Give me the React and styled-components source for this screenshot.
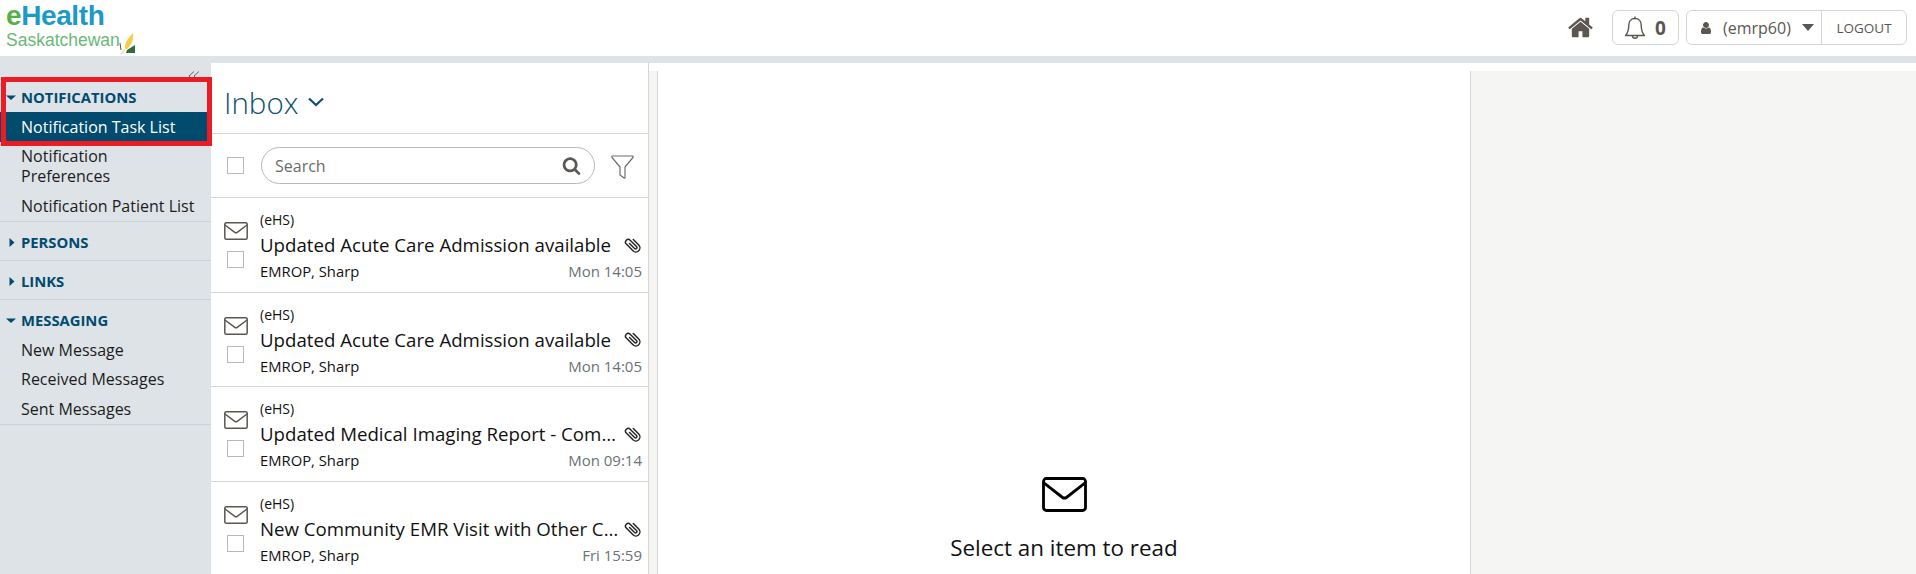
import React from "react";
import styled, { createGlobalStyle } from "styled-components";

const Global = createGlobalStyle`
  html, body { margin: 0; padding: 0; height: 100%; overflow: hidden; background: #fff; }
  body { font-family: "Open Sans", "Liberation Sans", sans-serif; color: #111; }
  * { box-sizing: border-box; }
`;

const Page = styled.div`
  width: 1916px;
  height: 574px;
  overflow: hidden;
  display: flex;
  flex-direction: column;
  position: relative;
`;

const TopBar = styled.header`
  height: 63px;
  flex: none;
  border-bottom: 7px solid #dee3e7;
  display: flex;
  align-items: flex-start;
  justify-content: space-between;
  padding-right: 9px;
`;

const Logo = styled.div`
  padding: 0 0 0 6px;
  display: flex;
  flex-direction: column;
  height: 56px;
  font-family: "Liberation Sans", Arial, sans-serif;
`;

const LogoMain = styled.div`
  font-size: 28px;
  line-height: 32px;
  font-weight: 700;
  letter-spacing: -0.4px;
  color: #1b9ac9;
  b { color: #55b047; font-weight: 700; }
`;

const LogoSub = styled.div`
  font-size: 17.5px;
  line-height: 16px;
  height: 16px;
  color: #69b977;
  display: flex;
  align-items: flex-start;
  svg { flex: none; margin-left: -2px; }
`;

const HeaderTools = styled.div`
  display: flex;
  align-items: center;
  height: 35px;
  margin-top: 10px;
  color: #5b5750;
`;

const HomeLink = styled.span`
  display: flex;
  margin-right: 18px;
`;

const BellBox = styled.div`
  width: 67px;
  height: 35px;
  border: 1px solid #d5d5d5;
  border-radius: 6px;
  display: flex;
  align-items: center;
  padding-left: 11px;
  gap: 9px;
  font-size: 19px;
  font-weight: 700;
  margin-right: 7px;
`;

const UserBox = styled.div`
  width: 221px;
  height: 35px;
  border: 1px solid #d5d5d5;
  border-radius: 6px;
  display: flex;
  align-items: center;
`;

const UserName = styled.div`
  width: 135px;
  flex: none;
  height: 100%;
  display: flex;
  align-items: center;
  padding-left: 12px;
  font-size: 16px;
  color: #5b5750;
  border-right: 1px solid #d5d5d5;
  span { margin-left: 10px; margin-right: 11px; }
`;

const Logout = styled.div`
  flex: 1;
  text-align: center;
  font-size: 13.5px;
  color: #5b5750;
`;

const Body = styled.div`
  flex: 1;
  min-height: 0;
  display: flex;
`;

const Sidebar = styled.nav`
  width: 211px;
  flex: none;
  background: #dee3e7;
`;

const Collapse = styled.div`
  height: 21px;
  display: flex;
  justify-content: flex-end;
  align-items: flex-start;
  padding: 8px 11px 0 0;
`;

const Section = styled.section`
  padding: ${(p) => (p.$first ? "0" : "7.5px")} 0 ${(p) => (p.$open ? "0" : "2.5px")};
  border-bottom: 1px solid #c9d4da;
`;

const SectionHead = styled.div`
  height: 28px;
  display: flex;
  align-items: center;
  padding: 0 0 2px 6px;
  font-size: 14.8px;
  font-weight: 700;
  color: #004b6e;
  svg { width: 11px; margin-right: 4px; flex: none; }
`;

const MenuItem = styled.div`
  padding: 4.75px 12px 4.75px 21px;
  font-size: 16px;
  line-height: 20px;
  color: ${(p) => (p.$active ? "#fff" : "#1c1c1c")};
  background: ${(p) => (p.$active ? "#004b6e" : "transparent")};
`;

const InboxColumn = styled.div`
  width: 438px;
  flex: none;
  border-right: 1px solid #d5d5d5;
`;

const InboxTitle = styled.div`
  height: 71px;
  border-bottom: 1px solid #d5d5d5;
  padding: 8px 0 0 13px;
  display: flex;
  align-items: center;
  gap: 10px;
  font-size: 29.5px;
  font-weight: 300;
  color: #0f4f74;
`;

const SearchRow = styled.div`
  height: 64px;
  border-bottom: 1px solid #d5d5d5;
  display: flex;
  align-items: center;
  padding-left: 16px;
`;

const Box = styled.span`
  width: 17px;
  height: 17px;
  flex: none;
  border: 1px solid #b9b9b9;
  display: block;
  background: #fff;
`;

const SearchField = styled.div`
  width: 334px;
  height: 37px;
  margin-left: 17px;
  margin-right: 16px;
  border: 1px solid #b9b9b9;
  border-radius: 19px;
  display: flex;
  align-items: center;
  justify-content: space-between;
  padding: 0 13px;
  font-size: 16px;
  color: #6b6b6b;
`;

const FilterIcon = styled.svg`
  flex: none;
  margin-top: 3px;
`;

const Row = styled.article`
  height: 94.7px;
  border-bottom: 1px solid #d5d5d5;
  display: flex;
  padding: 13px 6px 0 13px;
`;

const RowMarks = styled.div`
  width: 36px;
  flex: none;
  padding-top: 11px;
  display: flex;
  flex-direction: column;
  gap: 11px;
  span { margin-left: 3px; }
`;

const RowText = styled.div`
  min-width: 0;
  flex: 1;
`;

const Source = styled.div`
  font-size: 14px;
  line-height: 17px;
  color: #111;
`;

const SubjectLine = styled.div`
  display: flex;
  align-items: center;
  height: 33px;
`;

const Subject = styled.div`
  flex: none;
  max-width: 361px;
  white-space: nowrap;
  overflow: hidden;
  text-overflow: ellipsis;
  font-size: 18.67px;
  color: #111;
`;

const ClipSlot = styled.div`
  margin-left: auto;
  display: flex;
`;

const MetaLine = styled.div`
  display: flex;
  justify-content: space-between;
  font-size: 14.8px;
  line-height: 21px;
  color: #111;
`;

const When = styled.span`
  font-size: 15px;
  color: #6c7278;
`;

const Gutter = styled.div`
  width: 9px;
  flex: none;
  margin-top: 8px;
  background: #f5f5f3;
  border-right: 1px solid #d5d5d5;
`;

const ReadingPane = styled.main`
  width: 813px;
  flex: none;
  border-right: 1px solid #d5d5d5;
  margin-top: 8px;
  padding-top: 406px;
  display: flex;
  flex-direction: column;
  align-items: center;
`;

const Hint = styled.div`
  font-size: 22.4px;
  line-height: 30px;
  margin-top: 21px;
  color: #111;
`;

const SidePanel = styled.aside`
  flex: 1;
  margin-top: 8px;
  background: #f5f5f3;
`;

const Callout = styled.div`
  position: absolute;
  left: 1px;
  top: 77px;
  width: 211px;
  height: 69px;
  border: 5px solid #ed1c24;
  pointer-events: none;
`;

const Caret = ({ open }) => (
  <svg viewBox="0 0 11 11" height="11">
    {open ? <path d="M0 3.5h10L5 8z" fill="#004b6e" /> : <path d="M3.500 1l5 4.500-5 4.500z" fill="#004b6e" />}
  </svg>
);

const Envelope = ({ w = 24, h = 18, sw = 1.5, color = "#5b5750" }) => (
  <svg width={w} height={h} viewBox="0 0 24 18" preserveAspectRatio="none" fill="none" stroke={color} strokeWidth={sw} strokeLinejoin="round" strokeLinecap="round">
    <rect x="0.8" y="0.8" width="22.400" height="16.400" rx="1.500" />
    <path d="M1 3l9.800 7.400a2 2 0 0 0 2.400 0L23 3" />
  </svg>
);

const Clip = () => (
  <svg width="18" height="18" viewBox="0 0 19 20" fill="none" stroke="#222" strokeWidth="1.600" strokeLinecap="round" strokeLinejoin="round">
    <path transform="rotate(-45 9.500 10)" d="M8 6v8a1.500 1.500 0 0 0 3 0V4a3 3 0 0 0-6 0v10.500a4.500 4.500 0 0 0 9 0V6" />
  </svg>
);

const subjects = [
  ["Updated Acute Care Admission available", "Mon 14:05"],
  ["Updated Acute Care Admission available", "Mon 14:05"],
  ["Updated Medical Imaging Report - Community Results", "Mon 09:14"],
  ["New Community EMR Visit with Other Clinic Available", "Fri 15:59"],
];

export default function App() {
  return (
    <Page>
      <Global />
      <TopBar>
        <Logo>
          <LogoMain><b>e</b>Health</LogoMain>
          <LogoSub>
            Saskatchewan
            <svg width="18" height="23" viewBox="0 0 18 23">
              <path d="M7 17C6 11 11 5 15 1c1 5-1 12-6 16z" fill="#f3cf4a" />
              <path d="M2 23c1-4 3-6 6-7-1 3-3 6-6 7z" fill="#f6e9a6" />
              <path d="M9 18l8-5v8H8z" fill="#2f6b3c" />
              <path d="M2 11l1 7" stroke="#555" strokeWidth="1" />
            </svg>
          </LogoSub>
        </Logo>
        <HeaderTools>
          <HomeLink>
            <svg width="27" height="27" viewBox="0 0 1792 1792" fill="#5b5750">
              <path d="M1472 992v480q0 26-19 45t-45 19h-384v-384h-256v384h-384q-26 0-45-19t-19-45v-480q0-1 .5-3t.5-3l575-474 575 474q1 2 1 6zm223-69l-62 74q-8 9-21 11h-3q-13 0-21-7l-692-577-692 577q-12 8-24 7-13-2-21-11l-62-74q-8-10-7-23.500t11-21.500l719-599q32-26 76-26t76 26l244 204v-195q0-14 9-23t23-9h192q14 0 23 9t9 23v408l219 182q10 8 11 21.500t-7 23.500z" />
            </svg>
          </HomeLink>
          <BellBox>
            <svg width="22" height="26" viewBox="0 0 22 26" fill="none" stroke="#5b5750" strokeWidth="1.400" strokeLinejoin="round">
              <path d="M11 3.500c-4 0-6.200 3-6.200 6.500 0 6-1.300 8.500-3.300 10.500h19c-2-2-3.300-4.500-3.300-10.500 0-3.500-2.200-6.500-6.200-6.500z" />
              <path d="M11 1.500v2M8.500 21c0 3 5 3 5 0" />
            </svg>
            0
          </BellBox>
          <UserBox>
            <UserName>
              <svg width="14" height="14" viewBox="0 0 1792 1792" fill="#5b5750">
                <path d="M1536 1399q0 109-62.500 187t-150.500 78h-854q-88 0-150.500-78t-62.500-187q0-85 8.500-160.500t31.500-152 58.500-131 94-89 134.500-34.500q131 128 313 128t313-128q76 0 134.500 34.500t94 89 58.500 131 31.500 152 8.500 160.500zm-256-887q0 159-112.500 271.500t-271.500 112.500-271.500-112.500-112.500-271.500 112.500-271.500 271.500-112.500 271.500 112.500 112.500 271.500z" />
              </svg>
              <span>(emrp60)</span>
              <svg width="12" height="7" viewBox="0 0 12 7"><path d="M0 0h12L6 7z" fill="#5b5750" /></svg>
            </UserName>
            <Logout>LOGOUT</Logout>
          </UserBox>
        </HeaderTools>
      </TopBar>
      <Body>
        <Sidebar>
          <Collapse>
            <svg width="12" height="10" viewBox="0 0 12 10" fill="none" stroke="#666" strokeWidth="1">
              <path d="M6 .5L1 5l4.500 4.500M11 .5L6 5l4.500 4.500" />
            </svg>
          </Collapse>
          <Section $first $open>
            <SectionHead><Caret open />NOTIFICATIONS</SectionHead>
            <MenuItem $active>Notification Task List</MenuItem>
            <MenuItem>Notification Preferences</MenuItem>
            <MenuItem>Notification Patient List</MenuItem>
          </Section>
          <Section>
            <SectionHead><Caret />PERSONS</SectionHead>
          </Section>
          <Section>
            <SectionHead><Caret />LINKS</SectionHead>
          </Section>
          <Section $open>
            <SectionHead><Caret open />MESSAGING</SectionHead>
            <MenuItem>New Message</MenuItem>
            <MenuItem>Received Messages</MenuItem>
            <MenuItem>Sent Messages</MenuItem>
          </Section>
        </Sidebar>
        <InboxColumn>
          <InboxTitle>
            Inbox
            <svg width="16" height="10" viewBox="0 0 16 10" fill="none" stroke="#0f4f74" strokeWidth="2.200">
              <path d="M1 1.500l7 6.500 7-6.500" />
            </svg>
          </InboxTitle>
          <SearchRow>
            <Box />
            <SearchField>
              Search
              <svg width="19" height="19" viewBox="0 0 1792 1792" fill="#5b5750">
                <path d="M1216 832q0-185-131.500-316.500t-316.500-131.500-316.500 131.500-131.500 316.500 131.500 316.500 316.500 131.500 316.500-131.500 131.500-316.500zm512 832q0 52-38 90t-90 38q-54 0-90-38l-343-342q-179 124-399 124-143 0-273.500-55.500t-225-150-150-225-55.500-273.500 55.500-273.500 150-225 225-150 273.500-55.500 273.500 55.500 225 150 150 225 55.500 273.500q0 220-124 399l343 343q37 37 37 90z" />
              </svg>
            </SearchField>
            <FilterIcon width="23" height="25" viewBox="0 0 23 25" fill="none" stroke="#6e6e6e" strokeWidth="1.200" strokeLinejoin="round">
              <path d="M1 1h21v1.500L14 12v10.500q0 1-1 .5l-4-3V12L1 2.500z" />
            </FilterIcon>
          </SearchRow>
          {subjects.map(([subject, when], i) => (
            <Row key={i}>
              <RowMarks>
                <Envelope />
                <Box />
              </RowMarks>
              <RowText>
                <Source>(eHS)</Source>
                <SubjectLine>
                  <Subject>{subject}</Subject>
                  <ClipSlot><Clip /></ClipSlot>
                </SubjectLine>
                <MetaLine>
                  <span>EMROP, Sharp</span>
                  <When>{when}</When>
                </MetaLine>
              </RowText>
            </Row>
          ))}
        </InboxColumn>
        <Gutter />
        <ReadingPane>
          <Envelope w={45} h={35} sw={1.500} color="#000" />
          <Hint>Select an item to read</Hint>
        </ReadingPane>
        <SidePanel />
      </Body>
      <Callout />
    </Page>
  );
}
